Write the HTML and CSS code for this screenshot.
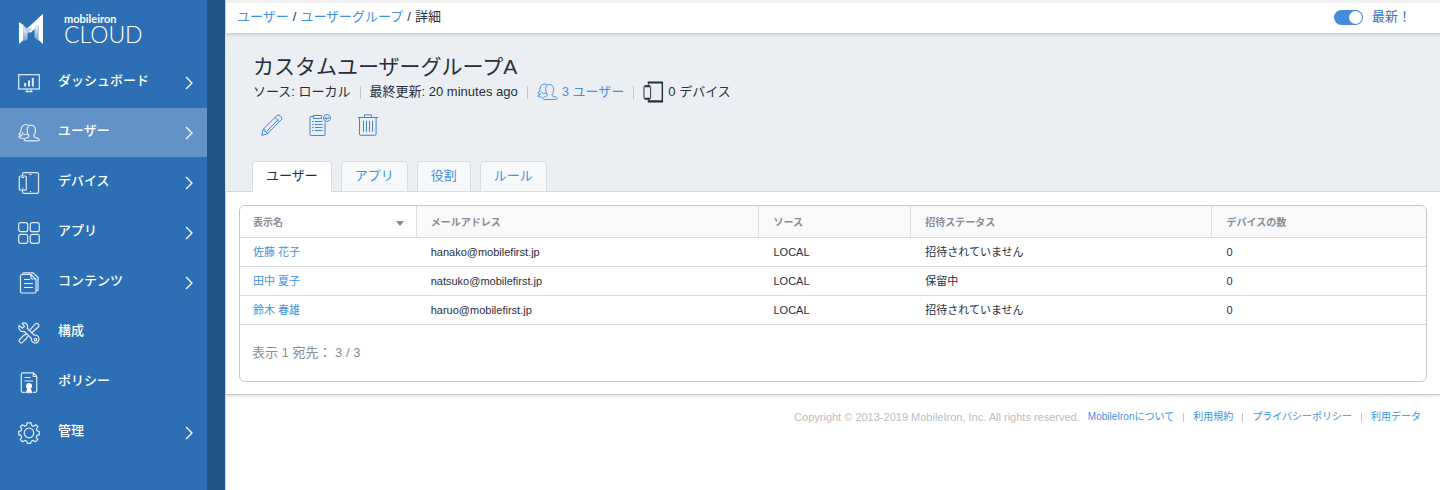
FILE: index.html
```html
<!DOCTYPE html>
<html lang="ja">
<head>
<meta charset="utf-8">
<title>カスタムユーザーグループA</title>
<link rel="stylesheet" href="styles.css">
</head>
<body>
<svg class="symbols" aria-hidden="true">
  <symbol id="users" viewBox="0 0 22 18">
    <path d="M7.8 16.8c-2.200 0-2-1.800-.2-2.500 1.500-.7 3.400-.9 3.400-2.100 0-1-1.500-2-1.800-4.500C8.700 3.700 10 1.200 13.200 1.200s4.600 2.500 4.200 6.500c-.3 2.500-1.700 3.500-1.700 4.500 0 1.200 1.800 1.400 4 2.100 1.900.7 2.100 2.500 0 2.500z"/>
    <path d="M10.300 1.300C8.900.5 6.200.3 4.600 1.900 3 3.500 3.500 6 2.500 8.300c-.5 1-.8 1.800-1.700 2 .8.900 2 .9 3.100.7-.3 1-1.500 1.400-3.200 2 .2 1 1.800 1.400 4.800 1.400M7.500 10.200c1 .3 1.900.6 2.600.1M4.300 8.300c.4 1.400 1.400 2 2.800 2.300"/>
  </symbol>
  <symbol id="devices" viewBox="0 0 22 22">
    <path d="M4.500 4V2Q4.500.7 5.800.7h13.400q1.300 0 1.300 1.300v18q0 1.300-1.300 1.300H5.800q-1.300 0-1.300-1.300V18.500"/>
    <rect x="1.300" y="4" width="7" height="14.200" rx="1"/><path d="M3.500 5.500h2.600M4.800 15.800v1M11.300 2.500h2.400M12.500 19v1"/>
  </symbol>
  <symbol id="chevron" viewBox="0 0 8 14"><path d="M1 1l6 6-6 6"/></symbol>
</svg>
<div class="app">
  <aside class="sidebar">
    <a class="brand" href="#">
      <svg class="brand-mark" viewBox="0 0 24 30" aria-hidden="true">
        <defs><linearGradient id="fade" x1="0" y1="0" x2="0" y2="1"><stop offset="0" stop-color="#fff"/><stop offset="1" stop-color="#6f9fd0"/></linearGradient></defs>
        <path fill="#fff" d="M0 8l4.500 3v15L0 30z"/>
        <path fill="#fff" d="M0 8l8 6.500L24 0v6L11.500 19z"/>
        <path fill="url(#fade)" d="M4.500 12.500l4 4v9.500L4.500 27z"/>
        <path fill="#b4d0e8" d="M8 14.500l5.500 0-4.500 5-4.500-5z"/>
        <path fill="url(#fade)" d="M15.500 13l4-4V27l-4-3.500z"/>
        <path fill="#fff" d="M19.500 4L24 0v30l-4.500-4z"/>
      </svg>
      <span class="brand-text"><span class="brand-name">mobileiron</span><span class="brand-product">CLOUD</span></span>
    </a>
    <nav class="nav">
      <a class="nav-item" href="#">
        <svg class="nav-icon" viewBox="0 0 22 22"><rect x=".7" y="2.700" width="20.600" height="14.300"/><path d="M9 17v2.500M13 17v2.500M7.500 19.700h7"/><path class="heavy" d="M7.200 11v3.500M11 8.500v6M14.800 6v8.500"/></svg>
        <span class="nav-label">ダッシュボード</span><svg class="chevron"><use href="#chevron"/></svg></a>
      <a class="nav-item active" href="#">
        <svg class="nav-icon"><use href="#users"/></svg>
        <span class="nav-label">ユーザー</span><svg class="chevron"><use href="#chevron"/></svg></a>
      <a class="nav-item" href="#">
        <svg class="nav-icon"><use href="#devices"/></svg>
        <span class="nav-label">デバイス</span><svg class="chevron"><use href="#chevron"/></svg></a>
      <a class="nav-item" href="#">
        <svg class="nav-icon" viewBox="0 0 22 22"><rect x=".7" y=".7" width="9" height="9" rx="2"/><rect x="12.300" y=".7" width="9" height="9" rx="2"/><rect x=".7" y="12.300" width="9" height="9" rx="2"/><rect x="12.300" y="12.300" width="9" height="9" rx="2"/></svg>
        <span class="nav-label">アプリ</span><svg class="chevron"><use href="#chevron"/></svg></a>
      <a class="nav-item" href="#">
        <svg class="nav-icon" viewBox="0 0 22 22"><path d="M13 2.500H4q-1.500 0-1.500 1.500v15.500Q2.500 21 4 21h12.500q1.500 0 1.500-1.500V7.200zM4.500 2.300Q4.500.8 6 .8h9l5 4.500v12.500q0 1-1.500 1.200M13 2.500v3.300q0 1.200 1.200 1.200H18"/><path d="M6 7.500h6M6 11.500h9M6 15.500h9"/></svg>
        <span class="nav-label">コンテンツ</span><svg class="chevron"><use href="#chevron"/></svg></a>
      <a class="nav-item" href="#">
        <svg class="nav-icon" viewBox="0 0 22 22"><path d="M4 1.200C6 .3 9 1.200 9.500 3.500c.2 1 0 1.800-.2 2.700l6.900 7c1.500-.6 4.500.5 4.800 3.500.2 2.800-2 4.500-4.200 4.300-2.500-.2-3.800-2.300-3.300-4.500l-7.200-7C3.500 10.200.8 8.500.8 5c0-.8.2-1.300.4-1.500L4.500 6.300l2-1.800z"/><path d="M11.800 8.200l5.700-6.500c1.500-1.300 4.500 1.200 3 3.100l-6.400 5.700M8.500 12.300l-2.300.5-4.500 4.700c-1.500 1.700.8 4.200 2.700 2.900l4.500-4.500.5-2"/><circle cx="17.500" cy="17.700" r="1.300"/></svg>
        <span class="nav-label">構成</span></a>
      <a class="nav-item" href="#">
        <svg class="nav-icon" viewBox="0 0 22 22"><path d="M7 20.300H4.500q-1.200 0-1.200-1.200V2q0-1.200 1.200-1.200h11l3.200 3.400v14.900q0 1.200-1.200 1.200H15M15.300 1v3.500h3.200M6.500 5.500h6M6.500 9h8.500"/><g class="solid"><circle cx="11" cy="14" r="3"/><path d="M9.300 16.500l-1.800 4.800 1.900-.5.900 1.200.7-3 .7 3 .9-1.200 1.900.5-1.800-4.800z"/></g></svg>
        <span class="nav-label">ポリシー</span></a>
      <a class="nav-item" href="#">
        <svg class="nav-icon" viewBox="0 0 22 22"><path d="M9 .8h4l.5 2.500 2 .9 2.300-1.500 2 2-1.400 2.300.8 2L21.300 9.500v3.200l-2.200.6-.8 2 1.400 2.300-2.200 2.200-2.200-1.400-2 .8-.6 2.100H9.500l-.7-2.100-2-.8-2.300 1.400-2.200-2.200 1.400-2.300-.8-2-2.200-.6V9.500l2.200-.6.8-2L2.300 4.800l2.100-2 2.300 1.400 1.900-.9z"/><circle cx="11" cy="11" r="4.800"/></svg>
        <span class="nav-label">管理</span><svg class="chevron"><use href="#chevron"/></svg></a>
    </nav>
  </aside>

  <main class="main">
    <div class="topbar">
      <nav class="crumbs"><a href="#">ユーザー</a><span>/</span><a href="#">ユーザーグループ</a><span>/</span><span>詳細</span></nav>
      <label class="switch"><input type="checkbox" checked>最新！</label>
    </div>
    <header class="group">
      <h1 class="title">カスタムユーザーグループA</h1>
      <ul class="meta">
        <li>ソース: ローカル</li>
        <li>最終更新: 20 minutes ago</li>
        <li><a class="with-icon" href="#"><svg class="meta-icon"><use href="#users"/></svg>3 ユーザー</a></li>
        <li><span class="with-icon"><svg class="meta-icon" viewBox="0 0 22 22"><path fill="currentColor" stroke="none" d="M5 0h16v22H5v-3h1v.7h13.500V2.200H6V4H5z"/><rect x="1" y="5" width="7" height="13" rx="1"/><path class="bar" d="M1.500 5h6M1.500 18h6"/></svg>0 デバイス</span></li>
      </ul>
      <div class="actions">
        <button type="button" aria-label="編集"><svg viewBox="0 0 22 22"><path d="M.7 21.300l1.500-6L16 1.500q1.500-1.300 3 .2l1.300 1.300q1.300 1.400 0 2.800L6.500 19.700zM2.200 15.300l1.500.3.300 2 2 .3.500 1.800M6 17L17.300 5.500M14 3.500L18.500 8"/></svg></button>
        <button type="button" aria-label="割り当て"><svg viewBox="0 0 22 22"><path d="M4 2.500H2q-1 0-1 1v17q0 1 1 1h13q1 0 1-1V8.500M4.500 1.500h8v3h-8zM3 7.500h1.500M6 7.500h7.500M3 10.500h1.500M6 10.500h7.500M3 13.500h1.500M6 13.500h7.500M3 16.500h1.500M6 16.500h7.500"/><circle cx="18" cy="4" r="3.500"/><path d="M19.700 3v1.300h-3.500M17.500 2.800L16 4.300l1.500 1.500"/></svg></button>
        <button type="button" aria-label="削除"><svg viewBox="0 0 22 22"><path d="M.7 3.500h20.600M7.500 3V.8h6.800V3M2.500 3.800V20q0 1.300 1.300 1.300h14q1.300 0 1.300-1.300V3.800M6.500 6.800v11M9.500 6.800v11M12.500 6.800v11M15.500 6.800v11"/></svg></button>
      </div>
      <nav class="tabs"><a class="tab selected" href="#">ユーザー</a><a class="tab" href="#">アプリ</a><a class="tab" href="#">役割</a><a class="tab" href="#">ルール</a></nav>
    </header>
    <section class="content">
      <div class="panel">
        <table class="grid">
          <colgroup><col class="c-name"><col class="c-mail"><col class="c-source"><col class="c-status"><col class="c-devices"></colgroup>
          <thead><tr>
            <th class="sorted"><button type="button" class="sort">表示名<svg viewBox="0 0 8 5" aria-hidden="true"><path d="M0 0h8L4 5z"/></svg></button></th>
            <th>メールアドレス</th><th>ソース</th><th>招待ステータス</th><th>デバイスの数</th>
          </tr></thead>
          <tbody>
            <tr><td><a href="#">佐藤 花子</a></td><td>hanako@mobilefirst.jp</td><td>LOCAL</td><td>招待されていません</td><td>0</td></tr>
            <tr><td><a href="#">田中 夏子</a></td><td>natsuko@mobilefirst.jp</td><td>LOCAL</td><td>保留中</td><td>0</td></tr>
            <tr><td><a href="#">鈴木 春雄</a></td><td>haruo@mobilefirst.jp</td><td>LOCAL</td><td>招待されていません</td><td>0</td></tr>
          </tbody>
        </table>
        <p class="count">表示 1 宛先： 3 / 3</p>
      </div>
    </section>
    <footer class="footer">
      <span class="copyright">Copyright © 2013-2019 MobileIron, Inc. All rights reserved.</span>
      <ul class="legal"><li><a href="#">MobileIronについて</a></li><li><a href="#">利用規約</a></li><li><a href="#">プライバシーポリシー</a></li><li><a href="#">利用データ</a></li></ul>
    </footer>
  </main>
</div>
</body>
</html>
```
FILE: styles.css
```css
* { box-sizing: border-box; }
body {
  margin: 0;
  background: #fff;
  color: #272e3d;
  font: 13px/20px "Liberation Sans", "Noto Sans CJK JP", sans-serif;
}
a { color: #3f91e2; text-decoration: none; }
ul { margin: 0; padding: 0; list-style: none; }
svg { display: block; flex: none; fill: none; stroke: currentColor; }
button { padding: 0; border: 0; background: none; color: inherit; font: inherit; cursor: pointer; }
.symbols { position: absolute; width: 0; height: 0; }
.app { display: flex; min-height: 100vh; }

.sidebar {
  flex: none;
  width: 225px;
  border-right: 18px solid #235487;
  background: #2c6fb5;
}
.brand { display: flex; gap: 21px; height: 58px; padding: 14px 0 0 19px; color: #fff; }
.brand-mark { width: 24px; height: 30px; stroke: none; }
.brand-text { display: flex; flex-direction: column; font-family: Lato, sans-serif; }
.brand-name { font-size: 11px; line-height: 10px; font-weight: 700; }
.brand-product { font-size: 23px; line-height: 20px; font-weight: 300; }
.nav { display: flex; flex-direction: column; gap: 1px; }
.nav-item {
  display: flex;
  align-items: center;
  height: 49px;
  padding: 0 14px 0 18px;
  color: #fff;
}
.nav-item.active { background: #6292c8; }
.nav-icon { width: 22px; height: 22px; color: #e3edf7; stroke-width: 1.2; }
.nav-label { flex: 1; padding: 0 0 4px 18px; font-weight: 500; }
.chevron { width: 8px; height: 14px; stroke-width: 1.3; }
.heavy { stroke-width: 2; }
.solid { fill: #fff; stroke: none; }

.main { flex: 1; min-width: 0; border-left: 1px solid #d5ddea; }
.topbar {
  position: relative;
  display: flex;
  align-items: center;
  justify-content: space-between;
  height: 34px;
  padding: 0 33px 2px 11px;
  border-top: 3px solid #f2f2f2;
  border-bottom: 1px solid #cfd1d4;
  background: #fff;
  box-shadow: 0 1px 3px rgba(0, 0, 0, .14);
}
.crumbs { display: flex; gap: 4px; }
.switch { display: flex; align-items: center; gap: 9px; margin-right: -4px; color: #2f73b7; }
.switch input {
  appearance: none;
  width: 29px;
  height: 15px;
  margin: 0;
  padding: 1px;
  border-radius: 8px;
  background: #448ddb;
}
.switch input::before {
  content: "";
  display: block;
  width: 13px;
  height: 13px;
  margin-left: auto;
  border-radius: 50%;
  background: #fff;
}

.group { padding: 18px 27px 0 27px; border-bottom: 1px solid #d7dcdf; background: #ebeef2; }
.title { margin: 0; font-size: 21px; line-height: 30px; font-weight: 400; }
.meta { display: flex; align-items: center; height: 20px; }
.meta li { display: flex; align-items: center; }
.meta li + li::before { content: ""; width: 1px; height: 13px; margin: 0 9px; background: #c3c7cc; }
.with-icon { display: flex; align-items: center; gap: 4px; }
.meta-icon { width: 21px; height: 22px; }
.bar { stroke-width: 2; }
.actions { display: flex; gap: 26px; margin-top: 12px; padding-left: 8px; color: #3c86d6; }
.actions svg { width: 22px; height: 22px; }
.tabs { display: flex; gap: 9px; margin: 25px 0 -1px -1px; }
.tab {
  padding: 4px 13px 5px;
  border: 1px solid #d7dcdf;
  border-radius: 4px 4px 0 0;
  background: #f6f8fa;
}
.tab.selected { border-bottom-color: #fff; background: #fff; color: #272e3d; }

.content { padding: 13px 13px 12px; border-bottom: 1px solid #c6c8cc; box-shadow: 0 1px 3px rgba(0, 0, 0, .14); }
.panel { overflow: hidden; border: 1px solid #c4c7ca; border-radius: 6px; }
.grid { width: 100%; table-layout: fixed; border-spacing: 0; font-size: 11px; line-height: 16px; }
.c-name { width: 14.9%; }
.c-mail { width: 28.9%; }
.c-source { width: 12.8%; }
.c-status { width: 25.4%; }
.grid th, .grid td { padding: 6px 14px; border-bottom: 1px solid #d7dcdf; text-align: left; }
.grid th { padding: 9px 14px 6px; border-right: 1px solid #d7dcdf; background: #f9f9fa; color: #888c94; font-size: 10px; font-weight: 700; }
.grid th:last-child { border-right: 0; }
.grid th.sorted { background: #fff; }
.grid th:first-child, .grid td:first-child { padding-left: 13px; }
.sort { display: flex; align-items: center; justify-content: space-between; width: 100%; }
.sort svg { width: 8px; height: 5px; margin-right: -2px; fill: #888c94; stroke: none; }
.count { margin: 0; padding: 18px 12px; color: #868e96; }

.footer { display: flex; justify-content: flex-end; gap: 8px; padding: 12px 19px; font-size: 10px; }
.copyright { color: #bbbdc0; font-size: 11px; }
.legal { display: flex; }
.legal li { display: flex; align-items: center; }
.legal li + li::before { content: ""; width: 1px; height: 9px; margin: 0 9px; background: #c3c7cc; }
```
